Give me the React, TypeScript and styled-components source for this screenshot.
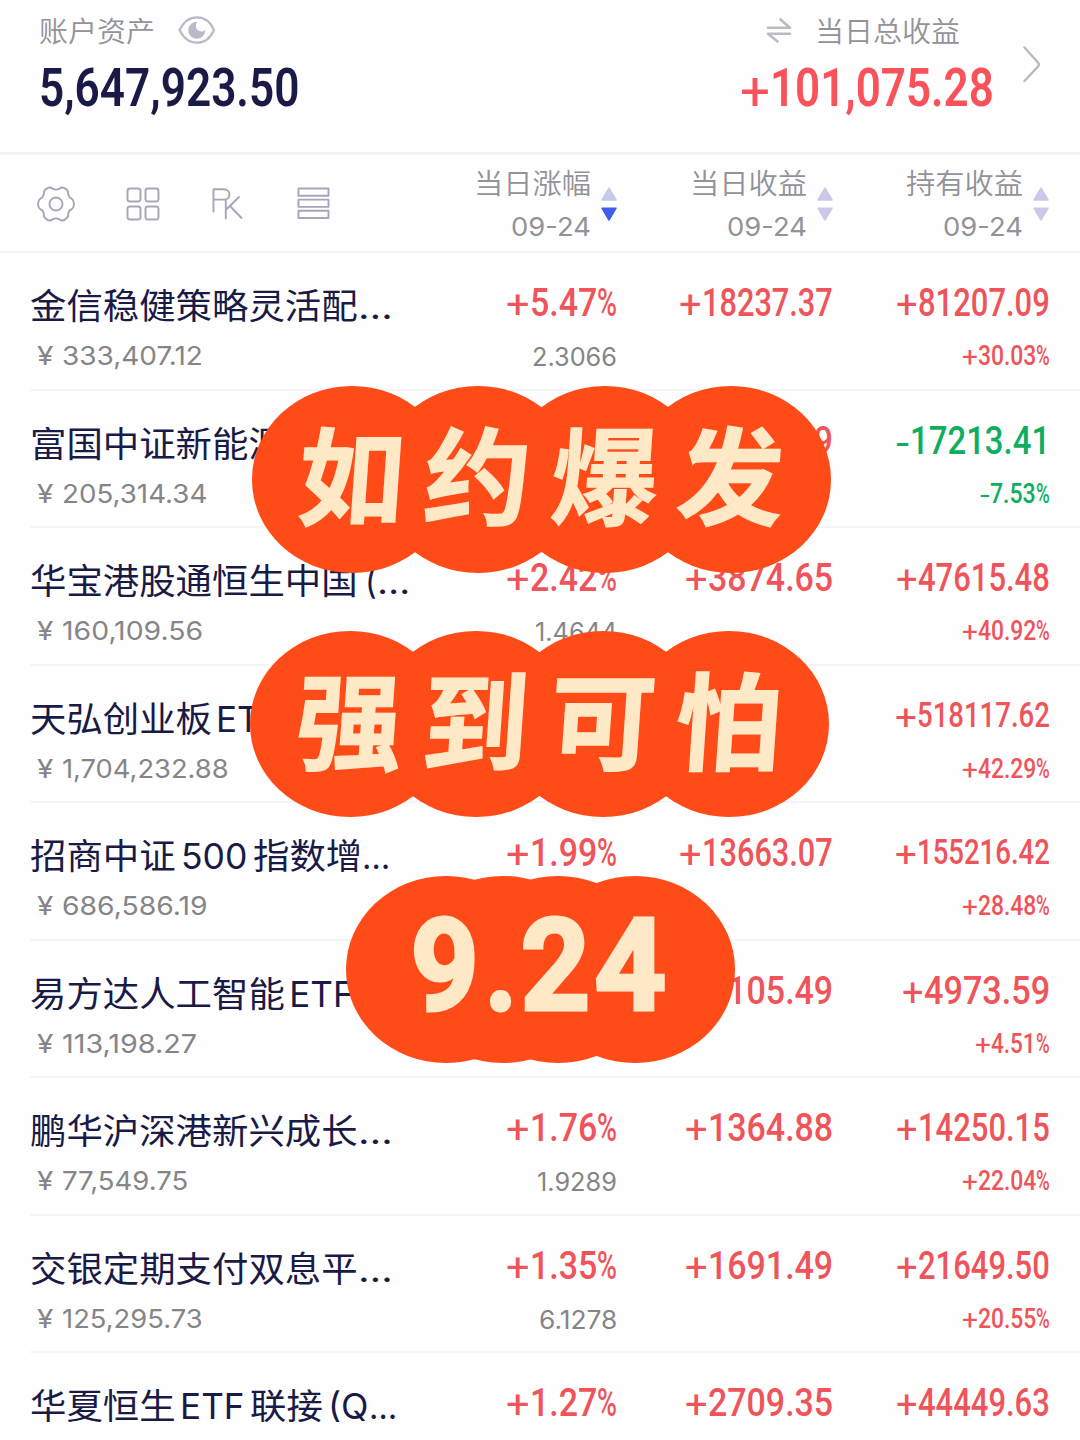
import React, { useLayoutEffect, useRef, useState } from "react";
import styled, { createGlobalStyle } from "styled-components";

const GlobalStyle = createGlobalStyle`
  * { box-sizing: border-box; }
  body {
    margin: 0;
    background: #fefefe;
    font-family: Inter, "Noto Sans CJK SC", sans-serif;
    text-autospace: no-autospace;
  }
`;

const INK = "#191a45";
const RED = "#ee545a";
const GREEN = "#0fae5e";

/* Text squeezed horizontally so that it fills a fixed width */
const FitBox = styled.span<{ $w: number; $end?: boolean; $gap?: number }>`
  display: flex;
  flex: none;
  justify-content: ${(p) => (p.$end ? "flex-end" : "flex-start")};
  width: ${(p) => p.$w}px;
  margin-left: ${(p) => p.$gap ?? 0}px;
`;
const FitText = styled.span<{ $end?: boolean }>`
  display: inline-block;
  flex: none;
  white-space: pre;
  transform-origin: ${(p) => (p.$end ? "right" : "left")} center;
`;

interface FitProps {
  w: number;
  end?: boolean;
  gap?: number;
  children: React.ReactNode;
}

function Fit({ w, end, gap, children }: FitProps) {
  const ref = useRef<HTMLSpanElement>(null);
  const [scale, setScale] = useState(1);
  useLayoutEffect(() => {
    const measure = () => {
      if (ref.current && ref.current.offsetWidth) setScale(w / ref.current.offsetWidth);
    };
    measure();
    document.fonts?.ready.then(measure);
  }, [w, children]);
  return (
    <FitBox $w={w} $end={end} $gap={gap}>
      <FitText ref={ref} $end={end} style={{ transform: `scaleX(${scale})` }}>
        {children}
      </FitText>
    </FitBox>
  );
}

const Page = styled.main`
  position: relative;
  width: 1080px;
  height: 1440px;
  overflow: hidden;
  background: #fefefe;
`;

const Summary = styled.header`
  display: flex;
  justify-content: space-between;
  height: 155px;
  padding: 10px 38px 0 39px;
  border-bottom: 3px solid #f3f3f7;
`;
const SummaryBlock = styled.div<{ $end?: boolean }>`
  display: flex;
  flex-direction: column;
  align-items: ${(p) => (p.$end ? "flex-end" : "flex-start")};
`;
const SummaryRight = styled.div`
  display: flex;
  gap: 28px;
`;
const SummaryLabel = styled.div<{ $inset?: number }>`
  display: flex;
  align-items: center;
  gap: 23px;
  height: 39px;
  margin-right: ${(p) => p.$inset ?? 0}px;
  color: #929298;
  font: 350 28px/36px "Noto Sans CJK SC", sans-serif;
`;
const Total = styled.div<{ $color: string }>`
  display: flex;
  margin-top: 9px;
  color: ${(p) => p.$color};
  font: 600 53px/60px Roboto, sans-serif;
`;
const ChevronSlot = styled.div`
  padding-top: 35px;
`;

const Toolbar = styled.nav`
  display: grid;
  grid-template-columns: 402px 216px 216px 216px;
  height: 98px;
  border-bottom: 2px solid #f4f4f7;
`;
const Tools = styled.div`
  display: flex;
  align-items: center;
  gap: 49.5px;
  padding: 2px 0 0 37px;
`;
const SortColumn = styled.div`
  display: flex;
  justify-content: flex-end;
  gap: 9px;
  padding-top: 9px;
`;
const SortText = styled.div`
  display: flex;
  flex-direction: column;
  align-items: flex-end;
  color: #929298;
`;
const SortTitle = styled.div`
  font: 350 28px/36px "Noto Sans CJK SC", sans-serif;
`;
const SortDate = styled.div`
  margin-top: 9px;
  font: 400 26px/36px Inter, sans-serif;
`;
const SortArrows = styled.div`
  padding-top: 22px;
`;

const Row = styled.section`
  display: grid;
  grid-template-columns: 402px 185px 216px 217px;
  height: 137.5px;
  margin-left: 30px;
  border-bottom: 2px solid #f5f5f7;
`;
const Cell = styled.div<{ $end?: boolean }>`
  display: flex;
  flex-direction: column;
  align-items: ${(p) => (p.$end ? "flex-end" : "flex-start")};
  padding-top: 28px;
`;
const FundName = styled.div`
  display: flex;
  height: 50px;
  color: ${INK};
  font: 370 35px/50px Inter, "Noto Sans CJK SC", sans-serif;
`;
const Holding = styled.div`
  display: flex;
  gap: 9px;
  height: 36px;
  margin-top: 7px;
  padding-left: 7px;
  color: #858587;
  font: 400 26px/36px Inter, sans-serif;
`;
const Figure = styled.div<{ $color: string; $small?: boolean }>`
  display: flex;
  height: 44px;
  color: ${(p) => p.$color};
  font: 500 ${(p) => (p.$small ? 35 : 38)}px/44px Roboto, sans-serif;
`;
const Sign = styled.span<{ $drop: number }>`
  display: flex;
  padding-top: ${(p) => p.$drop}px;
  font-weight: 400;
`;
const NetValue = styled.div`
  margin-top: 14px;
  color: #858587;
  font: 400 25px/36px Inter, sans-serif;
`;
const Rate = styled.div<{ $color: string }>`
  display: flex;
  margin-top: 14px;
  color: ${(p) => p.$color};
  font: 500 28px/34px Roboto, sans-serif;
`;

const Sticker = styled.div<{ $x: number; $y: number }>`
  position: absolute;
  left: ${(p) => p.$x}px;
  top: ${(p) => p.$y}px;
  display: flex;
`;
const Bubble = styled.div<{ $pull: number }>`
  flex: none;
  width: 200px;
  height: 186.5px;
  margin-left: ${(p) => -p.$pull}px;
  border-radius: 50%;
  background: #ff4b18;
`;
const StickerText = styled.div<{ $x: number; $y: number; $bold: number }>`
  position: absolute;
  left: ${(p) => p.$x}px;
  top: ${(p) => p.$y}px;
  display: flex;
  color: #ffe8c6;
  -webkit-text-stroke: ${(p) => p.$bold}px #ffe8c6;
  stroke-linejoin: round;
`;
const Brush = styled.span`
  width: 126.4px;
  text-align: center;
  font: 700 106px/130px "Noto Sans CJK SC", sans-serif;
  transform: skewX(-4deg);
`;
const Digit = styled.span<{ $gap: number }>`
  margin-left: ${(p) => p.$gap}px;
  font: 600 127px/140px Roboto, sans-serif;
`;

const line = { fill: "none", stroke: "#a6a6b8", strokeWidth: 1.9, strokeLinejoin: "round" as const };

const Eye = () => (
  <svg width="38" height="30" viewBox="0 0 38 30">
    <path d="M1.5 15C6 6 12 2.3 19 2.3S32 6 36 15C32 24 26 27.7 19 27.7S6 24 1.500 15Z" fill="none" stroke="#b9bac8" strokeWidth="2.2" />
    <path d="M19.500 6.800A8.500 8.500 0 1 0 27.300 15A5.300 5.300 0 0 1 19.500 6.800Z" fill="#b9bac8" />
  </svg>
);
const Swap = () => (
  <svg width="26" height="28" viewBox="0 0 26 28" fill="none" stroke="#b9bac4" strokeWidth="2.6" strokeLinecap="round" strokeLinejoin="round">
    <path d="M2 11.700H24L14.500 3.500M24 17.700H2L11.500 25.500" />
  </svg>
);
const Chevron = () => (
  <svg width="20" height="40" viewBox="0 0 20 40" fill="none" stroke="#b9bac2" strokeWidth="2.5" strokeLinecap="round" strokeLinejoin="round">
    <path d="M2.500 2.500L16 17.500Q17.800 19.500 16 21.500L2.500 36" />
  </svg>
);
const Gear = () => (
  <svg width="38" height="36" viewBox="0 0 38 36" {...line}>
    <path d="M10.500 2.200Q13 .8 15.500 2.600Q19 4.600 22.500 2.600Q25 .8 27.500 2.200Q31 4 31.200 7Q31.200 11.200 34.800 12.800Q37 14.500 37 18Q37 21.500 34.800 23.200Q31.200 24.800 31.200 29Q31 32 27.500 33.800Q25 35.200 22.500 33.400Q19 31.400 15.500 33.400Q13 35.200 10.500 33.800Q7 32 6.800 29Q6.800 24.800 3.200 23.200Q1 21.500 1 18Q1 14.500 3.200 12.800Q6.800 11.200 6.800 7Q7 4 10.500 2.200Z" />
    <circle cx="19" cy="18" r="6.500" />
  </svg>
);
const Grid = () => (
  <svg width="36" height="36" viewBox="0 0 36 36" {...line}>
    {[2.5, 20.5].map((x) =>
      [2.5, 20.5].map((y) => <rect key={`${x}-${y}`} x={x} y={y} width="13" height="13" rx="2.5" />)
    )}
  </svg>
);
const Versus = () => (
  <svg width="36" height="36" viewBox="0 0 36 36" {...line} strokeLinecap="round">
    <path d="M3.500 25.500V3.200H13.500C21.500 3.200 21.500 13.600 13.500 13.600H3.500M15.800 14V32.500M29 11L15.800 24M20 20L31.500 32" />
  </svg>
);
const Rows = () => (
  <svg width="36" height="36" viewBox="0 0 36 36" {...line}>
    {[2.5, 13.6, 24.7].map((y) => (
      <rect key={y} x="2.500" y={y} width="30" height="7.300" />
    ))}
  </svg>
);
const Arrows = ({ active }: { active?: boolean }) => (
  <svg width="18" height="36" viewBox="0 0 18 36" strokeLinejoin="round" strokeWidth="1.5">
    <path d="M9 2.200L16 14H2Z" fill="#c9c9e9" stroke="#c9c9e9" />
    <path d="M9 34L16 22.200H2Z" fill={active ? "#3e5eea" : "#c9c9e9"} stroke={active ? "#3e5eea" : "#c9c9e9"} />
  </svg>
);

/* A run of a fund name: its text, its width and the gap before it */
type Run = [text: string, width: number, gap?: number];
const PITCH = 36.4;
const cjk = (text: string, gap = 0): Run => [text, text.length * PITCH, gap];

type Num = [text: string, width: number];
interface Fund {
  name: Run[];
  held?: Num;
  rise?: string;
  value?: Num;
  gain?: Num;
  total: Num;
  rate?: Num;
}

const funds: Fund[] = [
  { name: [cjk("金信稳健策略灵活配"), ["…", 34.5]], held: ["333,407.12", 141], rise: "+5.47%", value: ["2.3066", 85], gain: ["+18237.37", 154], total: ["+81207.09", 154], rate: ["+30.03%", 88] },
  { name: [cjk("富国中证新能源汽车"), ["…", 34.5]], held: ["205,314.34", 145], rise: "+2.80%", gain: ["+5592.09", 148], total: ["-17213.41", 154], rate: ["-7.53%", 70] },
  { name: [cjk("华宝港股通恒生中国"), ["(", 12, 7], ["…", 33]], held: ["160,109.56", 141], rise: "+2.42%", value: ["1.4644", 82], gain: ["+3874.65", 148], total: ["+47615.48", 154], rate: ["+40.92%", 88] },
  { name: [cjk("天弘创业板"), ["ETF", 64, 4], cjk("联接", 6), ["…", 32]], held: ["1,704,232.88", 167], total: ["+518117.62", 155], rate: ["+42.29%", 88] },
  { name: [cjk("招商中证"), ["500", 66, 5], cjk("指数增", 6), ["…", 28]], held: ["686,586.19", 146], rise: "+1.99%", gain: ["+13663.07", 154], total: ["+155216.42", 155], rate: ["+28.48%", 88] },
  { name: [cjk("易方达人工智能"), ["ETF", 64, 4.5], ["…", 32]], held: ["113,198.27", 135], gain: ["+2105.49", 148], total: ["+4973.59", 148], rate: ["+4.51%", 75] },
  { name: [cjk("鹏华沪深港新兴成长"), ["…", 34.5]], held: ["77,549.75", 126], rise: "+1.76%", value: ["1.9289", 80], gain: ["+1364.88", 148], total: ["+14250.15", 154], rate: ["+22.04%", 88] },
  { name: [cjk("交银定期支付双息平"), ["…", 34.5]], held: ["125,295.73", 141], rise: "+1.35%", value: ["6.1278", 78], gain: ["+1691.49", 148], total: ["+21649.50", 154], rate: ["+20.55%", 88] },
  { name: [cjk("华夏恒生"), ["ETF", 64, 4.5], cjk("联接", 6), ["(Q", 41, 5], ["…", 28]], rise: "+1.27%", gain: ["+2709.35", 148], total: ["+44449.63", 154] },
];

const columns = ["当日涨幅", "当日收益", "持有收益"];

/* A signed figure: sign, digits and percent mark each keep their own width */
function Signed({ text, w, sign, percent = 0, drop }: { text: string; w: number; sign: number; percent?: number; drop: number }) {
  const minus = text[0] === "-";
  const signWidth = minus ? sign * 0.62 : sign;
  const digits = text.slice(1).replace("%", "");
  return (
    <>
      <Sign $drop={drop}>
        <Fit w={signWidth}>{text[0]}</Fit>
      </Sign>
      <Fit w={w - signWidth - percent}>{digits}</Fit>
      {percent > 0 && <Fit w={percent}>%</Fit>}
    </>
  );
}

function FundRow({ fund }: { fund: Fund }) {
  const tone = fund.total[0].startsWith("-") ? GREEN : RED;
  return (
    <Row>
      <Cell>
        <FundName>
          {fund.name.map(([text, width, gap]) => (
            <Fit key={text} w={width} gap={gap}>{text}</Fit>
          ))}
        </FundName>
        {fund.held && (
          <Holding>
            <Fit w={16}>¥</Fit>
            <Fit w={fund.held[1]}>{fund.held[0]}</Fit>
          </Holding>
        )}
      </Cell>
      <Cell $end>
        <Figure $color={RED}>
          {fund.rise && <Signed text={fund.rise} w={111} sign={24} percent={20} drop={2} />}
        </Figure>
        {fund.value && (
          <NetValue>
            <Fit end w={fund.value[1]}>{fund.value[0]}</Fit>
          </NetValue>
        )}
      </Cell>
      <Cell $end>
        <Figure $color={RED}>
          {fund.gain && <Signed text={fund.gain[0]} w={fund.gain[1]} sign={23} drop={2} />}
        </Figure>
      </Cell>
      <Cell $end>
        <Figure $color={tone} $small={fund.total[0].length > 9}>
          <Signed text={fund.total[0]} w={fund.total[1]} sign={22} drop={2} />
        </Figure>
        {fund.rate && (
          <Rate $color={tone}>
            <Signed text={fund.rate[0]} w={fund.rate[1]} sign={16} percent={14} drop={1} />
          </Rate>
        )}
      </Cell>
    </Row>
  );
}

function PhraseSticker({ text, x, y }: { text: string; x: number; y: number }) {
  return (
    <Sticker $x={x} $y={y}>
      {[...text].map((c, i) => (
        <Bubble key={c} $pull={i ? 73.6 : 0} />
      ))}
      <StickerText $x={37} $y={20} $bold={1.5}>
        {[...text].map((c) => (
          <Brush key={c}>{c}</Brush>
        ))}
      </StickerText>
    </Sticker>
  );
}

export default function App() {
  return (
    <Page>
      <GlobalStyle />
      <Summary>
        <SummaryBlock>
          <SummaryLabel>
            <Fit w={116}>账户资产</Fit>
            <Eye />
          </SummaryLabel>
          <Total $color={INK}>
            <Fit w={260}>5,647,923.50</Fit>
          </Total>
        </SummaryBlock>
        <SummaryRight>
          <SummaryBlock $end>
            <SummaryLabel $inset={34}>
              <Swap />
              <Fit w={145}>当日总收益</Fit>
            </SummaryLabel>
            <Total $color="#f9525a">
              <Signed text="+101,075.28" w={254} sign={30} drop={4} />
            </Total>
          </SummaryBlock>
          <ChevronSlot>
            <Chevron />
          </ChevronSlot>
        </SummaryRight>
      </Summary>
      <Toolbar>
        <Tools>
          <Gear />
          <Grid />
          <Versus />
          <Rows />
        </Tools>
        {columns.map((title, i) => (
          <SortColumn key={title}>
            <SortText>
              <SortTitle>
                <Fit end w={117}>{title}</Fit>
              </SortTitle>
              <SortDate>
                <Fit end w={80}>09-24</Fit>
              </SortDate>
            </SortText>
            <SortArrows>
              <Arrows active={i === 0} />
            </SortArrows>
          </SortColumn>
        ))}
      </Toolbar>
      {funds.map((fund) => (
        <FundRow key={fund.name[0][0]} fund={fund} />
      ))}

      <PhraseSticker text="如约爆发" x={252} y={386} />
      <PhraseSticker text="强到可怕" x={250} y={630.5} />
      <Sticker $x={346} $y={876}>
        {[0, 143, 145, 123].map((pull, i) => (
          <Bubble key={i} $pull={pull} />
        ))}
        <StickerText $x={65} $y={20} $bold={5}>
          <Digit $gap={0}><Fit w={68}>9</Fit></Digit>
          <Digit $gap={6}><Fit w={32}>.</Fit></Digit>
          <Digit $gap={4}><Fit w={69}>2</Fit></Digit>
          <Digit $gap={5}><Fit w={71}>4</Fit></Digit>
        </StickerText>
      </Sticker>
    </Page>
  );
}
